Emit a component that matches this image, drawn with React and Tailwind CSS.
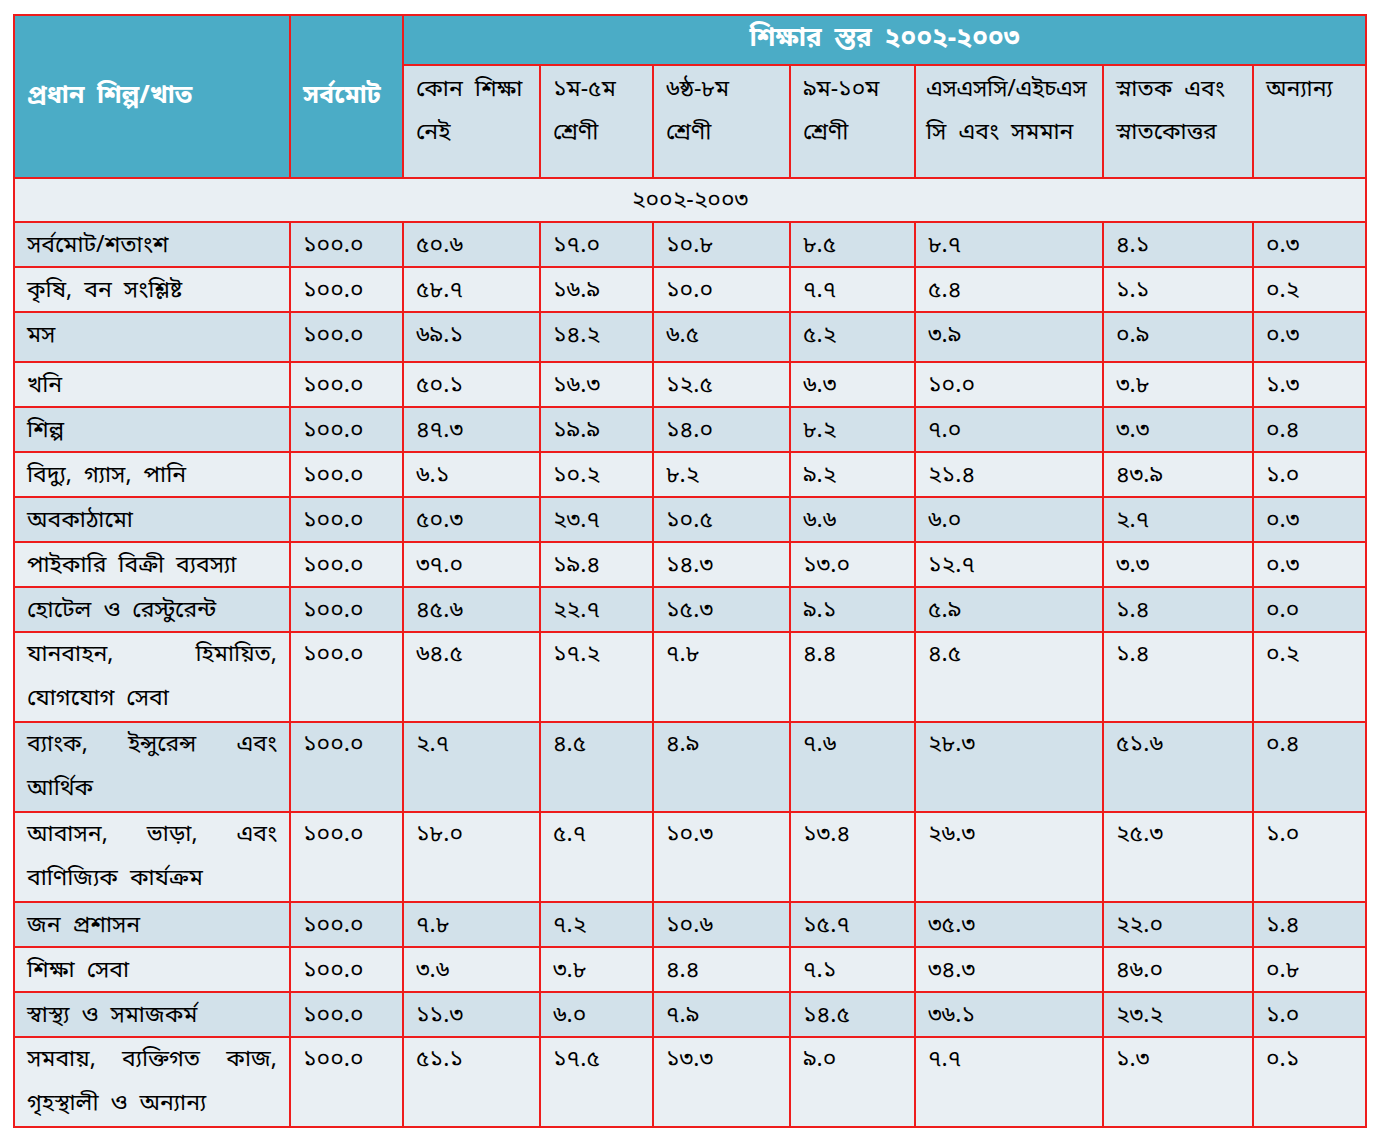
import React from 'react'

const rows = [
    { name: 'সর্বমোট/শতাংশ', vals: ['১০০.০', '৫০.৬', '১৭.০', '১০.৮', '৮.৫', '৮.৭', '৪.১', '০.৩'] },
    { name: 'কৃষি, বন সংশ্লিষ্ট', vals: ['১০০.০', '৫৮.৭', '১৬.৯', '১০.০', '৭.৭', '৫.৪', '১.১', '০.২'] },
    { name: 'মস', vals: ['১০০.০', '৬৯.১', '১৪.২', '৬.৫', '৫.২', '৩.৯', '০.৯', '০.৩'], h: 'h-[50px]' },
    { name: 'খনি', vals: ['১০০.০', '৫০.১', '১৬.৩', '১২.৫', '৬.৩', '১০.০', '৩.৮', '১.৩'] },
    { name: 'শিল্প', vals: ['১০০.০', '৪৭.৩', '১৯.৯', '১৪.০', '৮.২', '৭.০', '৩.৩', '০.৪'] },
    { name: 'বিদ্যু, গ্যাস, পানি', vals: ['১০০.০', '৬.১', '১০.২', '৮.২', '৯.২', '২১.৪', '৪৩.৯', '১.০'] },
    { name: 'অবকাঠামো', vals: ['১০০.০', '৫০.৩', '২৩.৭', '১০.৫', '৬.৬', '৬.০', '২.৭', '০.৩'] },
    { name: 'পাইকারি বিক্রী ব্যবস্যা', vals: ['১০০.০', '৩৭.০', '১৯.৪', '১৪.৩', '১৩.০', '১২.৭', '৩.৩', '০.৩'] },
    { name: 'হোটেল ও রেস্টুরেন্ট', vals: ['১০০.০', '৪৫.৬', '২২.৭', '১৫.৩', '৯.১', '৫.৯', '১.৪', '০.০'] },
    { name: 'যানবাহন, হিমায়িত, যোগযোগ সেবা', vals: ['১০০.০', '৬৪.৫', '১৭.২', '৭.৮', '৪.৪', '৪.৫', '১.৪', '০.২'], tall: true },
    { name: 'ব্যাংক, ইন্সুরেন্স এবং আর্থিক', vals: ['১০০.০', '২.৭', '৪.৫', '৪.৯', '৭.৬', '২৮.৩', '৫১.৬', '০.৪'], tall: true },
    { name: 'আবাসন, ভাড়া, এবং বাণিজ্যিক কার্যক্রম', vals: ['১০০.০', '১৮.০', '৫.৭', '১০.৩', '১৩.৪', '২৬.৩', '২৫.৩', '১.০'], tall: true },
    { name: 'জন প্রশাসন', vals: ['১০০.০', '৭.৮', '৭.২', '১০.৬', '১৫.৭', '৩৫.৩', '২২.০', '১.৪'] },
    { name: 'শিক্ষা সেবা', vals: ['১০০.০', '৩.৬', '৩.৮', '৪.৪', '৭.১', '৩৪.৩', '৪৬.০', '০.৮'] },
    { name: 'স্বাস্থ্য ও সমাজকর্ম', vals: ['১০০.০', '১১.৩', '৬.০', '৭.৯', '১৪.৫', '৩৬.১', '২৩.২', '১.০'] },
    { name: 'সমবায়, ব্যক্তিগত কাজ, গৃহস্থালী ও অন্যান্য', vals: ['১০০.০', '৫১.১', '১৭.৫', '১৩.৩', '৯.০', '৭.৭', '১.৩', '০.১'], tall: true },
]

const base = 'border-2 border-[#ee1c1c] align-top px-3 text-justify'
const cell = `${base} pt-[4px] pb-0 leading-[39px]`
const tallCell = `${base} py-0 leading-[44px]`
const sub = `${base} bg-[#d2e1ea] font-normal text-left pt-[3px] pb-0 leading-[43px]`

const App = () => {
    return (
        <div className="min-h-[1140px] bg-white pt-[14px] pl-[13px] font-['Noto_Sans_Bengali','Noto_Serif_Bengali','Lohit_Bengali','Noto_Sans',sans-serif] text-[23px] text-black [word-spacing:6px]">
            <table className="table-fixed border-collapse w-[1352px]">
                <colgroup>
                    <col className="w-[276px]" />
                    <col className="w-[113px]" />
                    <col className="w-[137px]" />
                    <col className="w-[113px]" />
                    <col className="w-[137px]" />
                    <col className="w-[125px]" />
                    <col className="w-[188px]" />
                    <col className="w-[150px]" />
                    <col className="w-[113px]" />
                </colgroup>
                <thead>
                    <tr className="h-[50px]">
                        <th rowSpan={2} className="border-2 border-[#ee1c1c] bg-[#4bacc6] text-white font-bold text-[25px] text-left px-3 align-middle">
                            প্রধান শিল্প/খাত
                        </th>
                        <th rowSpan={2} className="border-2 border-[#ee1c1c] bg-[#4bacc6] text-white font-bold text-[25px] text-left px-3 align-middle">
                            সর্বমোট
                        </th>
                        <th colSpan={7} className="border-2 border-[#ee1c1c] bg-[#4bacc6] text-white font-bold text-[26px] text-center leading-[44px]">
                            শিক্ষার স্তর ২০০২-২০০৩
                        </th>
                    </tr>
                    <tr className="h-[113px]">
                        <th className={sub}>কোন শিক্ষা নেই</th>
                        <th className={sub}>১ম-৫ম শ্রেণী</th>
                        <th className={sub}>৬ষ্ঠ-৮ম শ্রেণী</th>
                        <th className={sub}>৯ম-১০ম শ্রেণী</th>
                        <th className={`${sub} px-[10px]`}>
                            <span className="whitespace-nowrap tracking-[-0.3px]">এসএসসি/এইচএস</span> সি এবং সমমান
                        </th>
                        <th className={sub}>স্নাতক এবং স্নাতকোত্তর</th>
                        <th className={sub}>অন্যান্য</th>
                    </tr>
                </thead>
                <tbody>
                    <tr className="h-[44px]">
                        <td colSpan={9} className="border-2 border-[#ee1c1c] bg-[#e9eff3] text-center leading-[40px] pt-[2px]">
                            ২০০২-২০০৩
                        </td>
                    </tr>
                    {rows.map((r, i) => {
                        const bg = i % 2 === 0 ? 'bg-[#d2e1ea]' : 'bg-[#e9eff3]'
                        const h = r.tall ? 'h-[90px]' : r.h || 'h-[45px]'
                        const c = r.tall ? tallCell : cell
                        return (
                            <tr key={r.name} className={`${bg} ${h}`}>
                                <td className={c}>{r.name}</td>
                                {r.vals.map((v, j) => (
                                    <td key={j} className={c}>{v}</td>
                                ))}
                            </tr>
                        )
                    })}
                </tbody>
            </table>
        </div>
    )
}

export default App
